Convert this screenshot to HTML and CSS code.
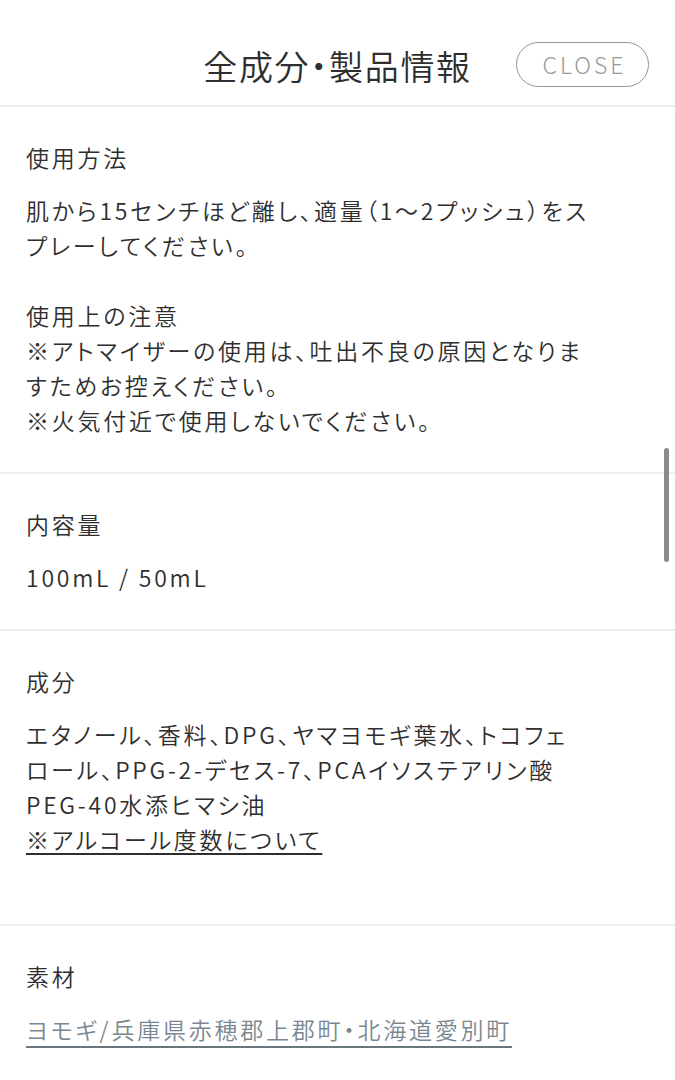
FILE: index.html
```html
<!DOCTYPE html>
<html lang="ja">
<head>
<meta charset="utf-8">
<link rel="stylesheet" href="styles.css">
</head>
<body>
<div class="modal">
  <header class="head">
    <h1 class="title">全成分・製品情報</h1>
    <button class="close">CLOSE</button>
  </header>
  <section class="sec">
    <h2 class="label">使用方法</h2>
    <p class="body">肌から15センチほど離し、適量（1〜2プッシュ）をスプレーしてください。<br><br>使用上の注意<br>※アトマイザーの使用は、吐出不良の原因となりますためお控えください。<br>※火気付近で使用しないでください。</p>
  </section>
  <section class="sec">
    <h2 class="label">内容量</h2>
    <p class="body">100mL / 50mL</p>
  </section>
  <section class="sec sec-tall">
    <h2 class="label">成分</h2>
    <p class="body">エタノール、香料、DPG、ヤマヨモギ葉水、トコフェ<wbr><span class="nowrap">ロール、</span>PPG-2-デセス-7、PCAイソステアリン酸<br>PEG-40水添ヒマシ油<br><a class="link" href="#">※アルコール度数について</a></p>
  </section>
  <section class="sec">
    <h2 class="label">素材</h2>
    <p class="body"><a class="origin" href="#">ヨモギ/兵庫県赤穂郡上郡町・北海道愛別町</a></p>
  </section>
  <div class="scrollbar"></div>
</div>
</body>
</html>
```
FILE: styles.css
```css
html, body {
  margin: 0;
  padding: 0;
  background: #fff;
}
body {
  font-family: "Noto Sans CJK JP", "Noto Sans", sans-serif;
  color: #2e2e2e;
}
.modal {
  width: 675px;
  height: 1080px;
  overflow: hidden;
  position: relative;
}
.head {
  height: 105px;
  border-bottom: 2px solid #efefef;
  display: flex;
  align-items: flex-start;
  justify-content: center;
  position: relative;
}
.title {
  margin: 0;
  padding-top: 46px;
  font-size: 34px;
  font-weight: 350;
  line-height: 40px;
  letter-spacing: 0.05em;
  font-feature-settings: "palt";
  color: #2e2e2e;
}
.close {
  position: absolute;
  right: 26px;
  top: 42px;
  width: 133px;
  height: 45px;
  border: 1.5px solid #969696;
  border-radius: 23px;
  background: #fff;
  color: #999;
  font-family: "Noto Sans CJK JP", "Noto Sans", sans-serif;
  font-weight: 300;
  font-size: 23px;
  line-height: 40px;
  letter-spacing: 0.13em;
  padding: 0 0 2px 4px;
}
.sec {
  padding: 33px 26px 34px;
  border-bottom: 2px solid #efefef;
}
.sec-tall {
  padding-bottom: 67px;
}
.label {
  margin: 0 0 18px;
  font-size: 23px;
  font-weight: 350;
  line-height: 35px;
  letter-spacing: 0.12em;
  font-feature-settings: "palt";
}
.body {
  margin: 0;
  font-size: 23px;
  font-weight: 350;
  line-height: 35px;
  letter-spacing: 0.12em;
  font-feature-settings: "palt";
  width: 570px;
}
.nowrap {
  white-space: nowrap;
}
.link {
  color: #2e2e2e;
  text-decoration: underline;
  text-underline-offset: 4px;
  text-decoration-thickness: 1.5px;
}
.origin {
  color: #7a8791;
  text-decoration: underline;
  text-decoration-color: #6b757c;
  text-underline-offset: 7px;
  text-decoration-thickness: 2px;
}
.scrollbar {
  position: absolute;
  left: 664px;
  top: 448px;
  width: 5px;
  height: 114px;
  border-radius: 3px;
  background: #8a8a8a;
}
```
